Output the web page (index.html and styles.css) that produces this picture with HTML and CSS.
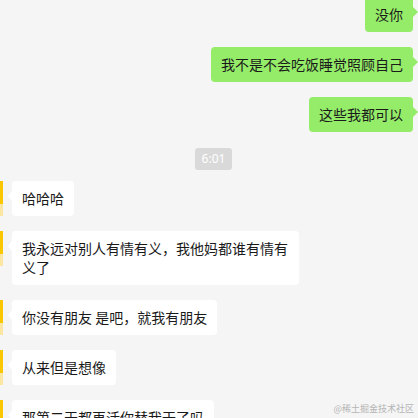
FILE: index.html
```html
<!DOCTYPE html>
<html>
<head>
  <meta charset="utf-8">
  <link rel="stylesheet" href="styles.css">
</head>
<body>
  <div class="chat">
    <div class="msg msg-right">
      <div class="bubble">没你</div>
    </div>
    <div class="msg msg-right">
      <div class="bubble">我不是不会吃饭睡觉照顾自己</div>
    </div>
    <div class="msg msg-right">
      <div class="bubble">这些我都可以</div>
    </div>

    <div class="time"><span>6:01</span></div>

    <div class="msg msg-left">
      <div class="avatar"></div>
      <div class="bubble">哈哈哈</div>
    </div>
    <div class="msg msg-left">
      <div class="avatar"></div>
      <div class="bubble">我永远对别人有情有义，我他妈都谁有情有义了</div>
    </div>
    <div class="msg msg-left">
      <div class="avatar"></div>
      <div class="bubble">你没有朋友 是吧，就我有朋友</div>
    </div>
    <div class="msg msg-left">
      <div class="avatar"></div>
      <div class="bubble">从来但是想像</div>
    </div>
    <div class="msg msg-left">
      <div class="avatar"></div>
      <div class="bubble">那第二天都再活你替我干了吗</div>
    </div>
  </div>

  <div class="watermark">@稀土掘金技术社区</div>
</body>
</html>
```

FILE: styles.css
```css
body {
  margin: 0;
  height: 418px;
  overflow: hidden;
  background-color: #f5f5f5;
  font-family: "Noto Sans CJK SC", "Noto Sans", sans-serif;
  color: #1a1a1a;
}
.chat {
  display: flex;
  flex-direction: column;
  gap: 15px;
  margin-top: -3px;
}
.msg {
  display: flex;
  align-items: flex-start;
}
.msg-right {
  justify-content: flex-end;
  padding-right: 5px;
}
.bubble {
  position: relative;
  box-sizing: border-box;
  max-width: 287px;
  padding: 8px 10px;
  font-size: 14px;
  line-height: 19px;
  border-radius: 4px;
}
.msg-right .bubble {
  background-color: #95ec69;
}
.msg-left .bubble {
  background-color: #fff;
}
/* little tails pointing at the avatars */
.msg-right .bubble::after {
  content: "";
  position: absolute;
  top: 10px;
  right: -5px;
  border-top: 5px solid transparent;
  border-bottom: 5px solid transparent;
  border-left: 5px solid #95ec69;
}
.msg-left .bubble::before {
  content: "";
  position: absolute;
  top: 10px;
  left: -4px;
  border-top: 5px solid transparent;
  border-bottom: 5px solid transparent;
  border-right: 4px solid #fff;
}
.avatar {
  flex-shrink: 0;
  width: 36px;
  height: 35px;
  margin-left: -33px;
  margin-right: 9px;
  background: linear-gradient(#fbc700 0, #fbc700 66%, #fde6a2 66%, #fde6a2 100%);
}
.time {
  display: flex;
  justify-content: center;
  padding-left: 9px;
  margin: 1px 0 -4px;
}
.time span {
  background-color: #d9d9d9;
  color: #fff;
  font-family: "Noto Sans", sans-serif;
  font-size: 12px;
  line-height: 22px;
  padding: 0 7px;
  border-radius: 3px;
}
.watermark {
  position: absolute;
  right: 4px;
  bottom: 3px;
  font-size: 9px;
  color: #b4b4b4;
}
```
